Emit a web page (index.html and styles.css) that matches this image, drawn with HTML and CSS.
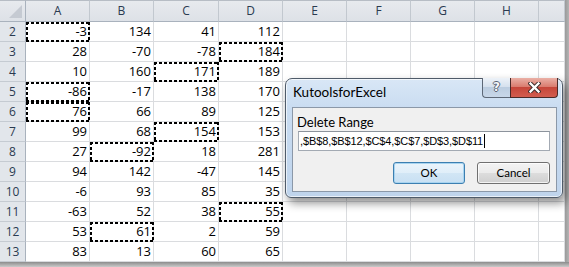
FILE: index.html
```html
<!DOCTYPE html>
<html>
<head>
<meta charset="utf-8">
<link rel="stylesheet" href="styles.css">
</head>
<body>
<div class="screen">
  <div class="top">
    <div class="sheet">
      <div class="corner"><span class="tri"></span></div>
      <div class="ch">A</div><div class="ch">B</div><div class="ch">C</div><div class="ch">D</div><div class="ch">E</div><div class="ch">F</div><div class="ch">G</div><div class="ch">H</div><div class="ch"></div>

      <div class="rh">2</div><div class="c m">-3</div><div class="c">134</div><div class="c">41</div><div class="c">112</div><div class="c"></div><div class="c"></div><div class="c"></div><div class="c"></div><div class="c"></div>
      <div class="rh">3</div><div class="c">28</div><div class="c">-70</div><div class="c">-78</div><div class="c m">184</div><div class="c"></div><div class="c"></div><div class="c"></div><div class="c"></div><div class="c"></div>
      <div class="rh">4</div><div class="c">10</div><div class="c">160</div><div class="c m">171</div><div class="c">189</div><div class="c"></div><div class="c"></div><div class="c"></div><div class="c"></div><div class="c"></div>
      <div class="rh">5</div><div class="c m">-86</div><div class="c">-17</div><div class="c">138</div><div class="c">170</div><div class="c"></div><div class="c"></div><div class="c"></div><div class="c"></div><div class="c"></div>
      <div class="rh">6</div><div class="c m">76</div><div class="c">66</div><div class="c">89</div><div class="c">125</div><div class="c"></div><div class="c"></div><div class="c"></div><div class="c"></div><div class="c"></div>
      <div class="rh">7</div><div class="c">99</div><div class="c">68</div><div class="c m">154</div><div class="c">153</div><div class="c"></div><div class="c"></div><div class="c"></div><div class="c"></div><div class="c"></div>
      <div class="rh">8</div><div class="c">27</div><div class="c m">-92</div><div class="c">18</div><div class="c">281</div><div class="c"></div><div class="c"></div><div class="c"></div><div class="c"></div><div class="c"></div>
      <div class="rh">9</div><div class="c">94</div><div class="c">142</div><div class="c">-47</div><div class="c">145</div><div class="c"></div><div class="c"></div><div class="c"></div><div class="c"></div><div class="c"></div>
      <div class="rh">10</div><div class="c">-6</div><div class="c">93</div><div class="c">85</div><div class="c">35</div><div class="c"></div><div class="c"></div><div class="c"></div><div class="c"></div><div class="c"></div>
      <div class="rh">11</div><div class="c">-63</div><div class="c">52</div><div class="c">38</div><div class="c m">55</div><div class="c"></div><div class="c"></div><div class="c"></div><div class="c"></div><div class="c"></div>
      <div class="rh">12</div><div class="c">53</div><div class="c m">61</div><div class="c">2</div><div class="c">59</div><div class="c"></div><div class="c"></div><div class="c"></div><div class="c"></div><div class="c"></div>
      <div class="rh">13</div><div class="c">83</div><div class="c">13</div><div class="c">60</div><div class="c">65</div><div class="c"></div><div class="c"></div><div class="c"></div><div class="c"></div><div class="c"></div>
    </div>
    <div class="edge-r"></div>
  </div>
  <div class="edge-b"></div>

  <div class="dialog">
    <div class="titlebar">
      <span class="title">KutoolsforExcel</span>
      <div class="caption-btns">
        <span class="help">?</span>
        <span class="close">
          <svg width="13" height="11" viewBox="0 0 13 11">
            <path d="M2.5 1.5 L10.5 9.5 M10.5 1.5 L2.5 9.5" stroke="#3a2a2a" stroke-width="4.2" stroke-linecap="square" fill="none"/>
            <path d="M2.5 1.5 L10.5 9.5 M10.5 1.5 L2.5 9.5" stroke="#ffffff" stroke-width="2.4" stroke-linecap="square" fill="none"/>
          </svg>
        </span>
      </div>
    </div>
    <div class="client">
      <div class="label">Delete Range</div>
      <div class="input">,$B$8,$B$12,$C$4,$C$7,$D$3,$D$11<span class="caret"></span></div>
      <div class="btns">
        <div class="btn ok">OK</div>
        <div class="btn">Cancel</div>
      </div>
    </div>
  </div>
</div>
</body>
</html>
```

FILE: styles.css
```css
* { box-sizing: border-box; }
body { margin: 0; background: #fff; }

.screen {
  position: relative;
  width: 569px;
  height: 267px;
  overflow: hidden;
  background: #fff;
}

.top { display: flex; height: 262px; }

.sheet {
  display: grid;
  grid-template-columns: 26px 64px 64px 65px 64px 64px 64px 64px 64px 26px;
  grid-template-rows: 22px repeat(12, 20px);
  width: 565px;
  font-family: "Open Sans", "Liberation Sans", sans-serif;
}

.edge-r { width: 4px; background: linear-gradient(90deg, #9a9a9a, #b4b4b4); }
.edge-b { height: 5px; background: linear-gradient(#8c8c8c, #cacaca); }

.corner {
  background: linear-gradient(#e7eaee, #dde1e7);
  border-top: 1px solid #b7bdc5;
  border-right: 1px solid #a9b2bd;
  border-bottom: 1px solid #a9b2bd;
  display: flex;
  justify-content: flex-end;
  align-items: flex-end;
  padding: 0 3px 3px 0;
}
.tri {
  width: 13px;
  height: 13px;
  background: #c5cad2;
  clip-path: polygon(100% 0, 100% 100%, 0 100%);
}

.ch {
  background: linear-gradient(#e7eaee, #dde1e7);
  border-top: 1px solid #b7bdc5;
  border-right: 1px solid #c2c8cf;
  border-bottom: 1px solid #a9b2bd;
  font-size: 12px;
  line-height: 20px;
  text-align: center;
  color: #2a3a50;
}

.rh {
  background: #e2e6eb;
  border-right: 1px solid #a9b2bd;
  border-bottom: 1px solid #c5cbd2;
  font-size: 12px;
  line-height: 19px;
  text-align: center;
  color: #2a3a50;
}

.c {
  position: relative;
  border-right: 1px solid #dadcdf;
  border-bottom: 1px solid #dadcdf;
  font-size: 13px;
  line-height: 19px;
  text-align: right;
  padding-right: 2px;
  color: #000;
}

.m::after {
  content: "";
  position: absolute;
  top: 0;
  left: 0;
  right: -1px;
  bottom: -1px;
  background:
    repeating-linear-gradient(90deg, #000 0 3px, transparent 3px 5px) top left / 100% 2px no-repeat,
    repeating-linear-gradient(90deg, #000 0 3px, transparent 3px 5px) bottom left / 100% 2px no-repeat,
    repeating-linear-gradient(180deg, #000 0 3px, transparent 3px 5px) top left / 2px 100% no-repeat,
    repeating-linear-gradient(180deg, #000 0 3px, transparent 3px 5px) top right / 2px 100% no-repeat;
}

/* dialog */
.dialog {
  position: absolute;
  left: 285px;
  top: 78px;
  width: 278px;
  height: 120px;
  border: 1px solid #4f5b69;
  border-radius: 7px 7px 6px 6px;
  background: linear-gradient(#d9e7f6, #c9dcf1 25%, #bfd4ec);
  box-shadow: inset 0 0 0 1px rgba(255, 255, 255, 0.65), 3px 5px 10px rgba(0, 0, 0, 0.45);
  padding: 0 5px 5px 6px;
  display: flex;
  flex-direction: column;
  font-family: Lato, "Noto Sans", sans-serif;
}

.titlebar { height: 28px; display: flex; align-items: flex-start; }
.title {
  margin-top: 5px;
  padding-left: 1px;
  font-size: 13.5px;
  line-height: 16px;
  color: #000;
}

.caption-btns {
  margin-left: auto;
  margin-right: -1px;
  margin-top: -1px;
  display: flex;
  height: 20px;
}
.help {
  width: 28px;
  border: 1px solid #5d6877;
  border-top: none;
  border-right: none;
  border-radius: 0 0 0 4px;
  background: linear-gradient(#edf2f8, #d6e1ee 45%, #bccde0 50%, #c8d7e9);
  color: #f4f6f9;
  font-family: "DejaVu Sans", sans-serif;
  font-weight: bold;
  font-size: 12px;
  line-height: 19px;
  text-align: center;
  text-shadow: 1px 0 0 #5a6473, -1px 0 0 #5a6473, 0 1px 0 #5a6473, 0 -1px 0 #5a6473;
}
.close {
  width: 48px;
  border: 1px solid #4a2a28;
  border-top: none;
  border-radius: 0 0 4px 0;
  background: linear-gradient(#eab0a6, #da7d70 45%, #c6463a 50%, #d25d4f);
  display: flex;
  align-items: center;
  justify-content: center;
}

.client {
  flex: 1;
  background: #f0f0f0;
  border: 1px solid #8b98a8;
  padding: 6px 6px 0 5px;
}
.label {
  font-size: 13px;
  line-height: 16px;
  margin-left: -1px;
  color: #000;
}
.input {
  margin-top: 1px;
  height: 20px;
  border: 1px solid #a3aab3;
  border-top-color: #8c939c;
  background: #fff;
  font-family: "Liberation Sans", Arial, sans-serif;
  font-size: 11px;
  line-height: 18px;
  letter-spacing: -0.1px;
  padding-left: 1px;
  white-space: nowrap;
  overflow: hidden;
  color: #000;
}
.caret {
  display: inline-block;
  width: 1px;
  height: 14px;
  background: #000;
  vertical-align: -3px;
  margin-left: 1px;
}

.btns {
  display: flex;
  justify-content: flex-end;
  gap: 12px;
  margin-top: 11px;
}
.btn {
  width: 73px;
  height: 22px;
  border: 1px solid #707070;
  border-radius: 3px;
  background: linear-gradient(#f3f3f3 0, #ebebeb 50%, #dddddd 50%, #cfcfcf 100%);
  box-shadow: inset 0 0 0 1px rgba(255, 255, 255, 0.75);
  font-size: 11.5px;
  line-height: 20px;
  text-align: center;
  color: #000;
}
.btn.ok {
  width: 72px;
  border-color: #3c7fb1;
  background: linear-gradient(#eaf4fb 0, #e0eef9 50%, #d2e6f5 50%, #c8e0f3 100%);
  box-shadow: inset 0 0 0 1px #a8d4f0;
}
```
